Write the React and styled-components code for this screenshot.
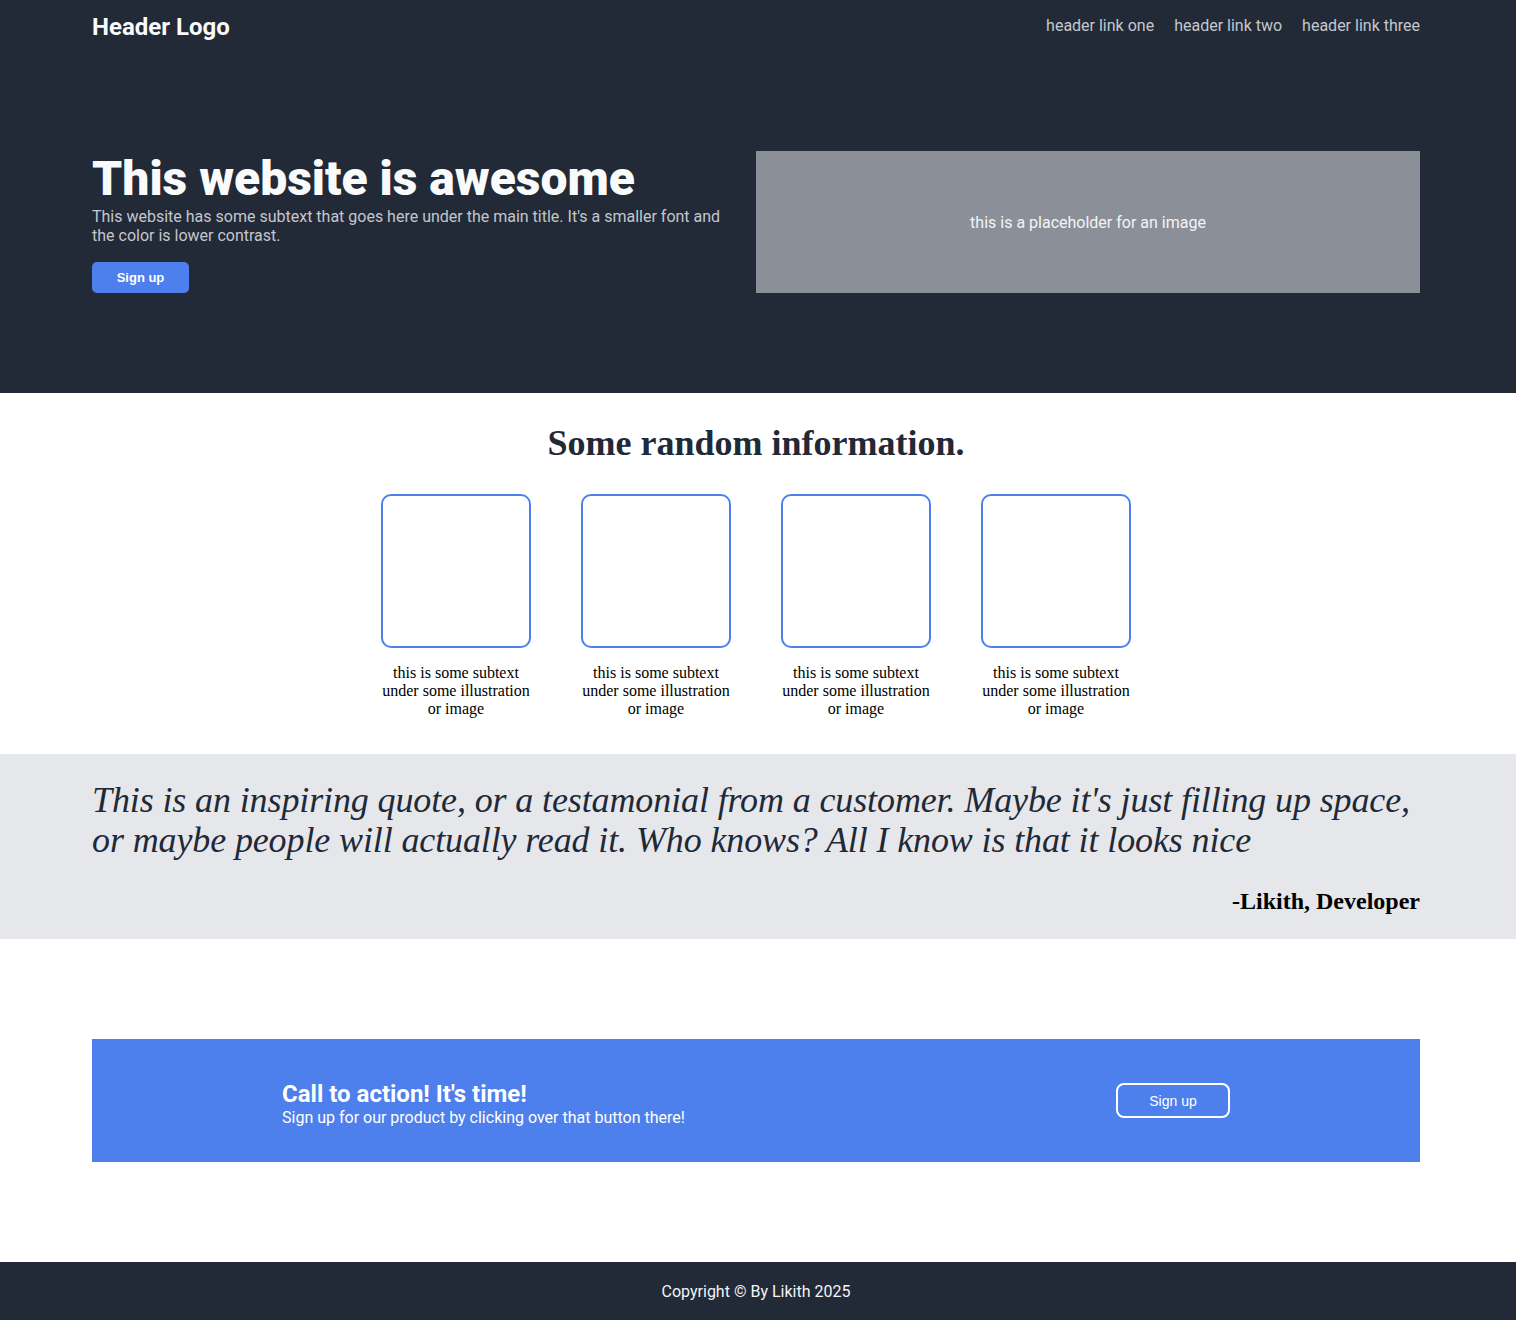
import styled, { createGlobalStyle } from 'styled-components'

const GlobalStyle = createGlobalStyle`
  * {
    box-sizing: border-box;
  }
  body {
    margin: 0;
    background: #ffffff;
    font-family: Roboto, "Liberation Sans", sans-serif;
  }
`

const Wrap = styled.div`
  padding: 0 96px 0 92px;
`

const Hero = styled.section`
  background: #222937;
  padding-bottom: 100px;
`

const Header = styled.header`
  display: flex;
  justify-content: space-between;
  align-items: center;
  height: 51px;
  padding-bottom: 1px;
`

const Logo = styled.div`
  color: #f9fafb;
  font-size: 24px;
  font-weight: 700;
  margin-top: 3px;
`

const Links = styled.nav`
  display: flex;
  gap: 20px;
`

const HeaderLink = styled.a`
  color: #c4c7cd;
  font-size: 16px;
  text-decoration: none;
`

const HeroBody = styled.div`
  display: flex;
  align-items: center;
  margin-top: 100px;
`

const HeroText = styled.div`
  flex: 1;
  padding-right: 24px;
`

const Title = styled.h1`
  margin: 0;
  color: #f9fafb;
  font-size: 48px;
  font-weight: 900;
  line-height: 56px;
`

const Subtext = styled.p`
  margin: 0;
  color: #c4c7cd;
  font-size: 16px;
  line-height: 19px;
`

const Button = styled.button`
  font-family: "Liberation Sans", Arial, sans-serif;
  color: #ffffff;
  cursor: pointer;
  ${({ $outline }) =>
    $outline
      ? `
    background: transparent;
    border: 2px solid #ffffff;
    border-radius: 8px;
    width: 114px;
    height: 35px;
    font-size: 14px;
    font-weight: 400;
  `
      : `
    background: #4d80ec;
    border: none;
    border-radius: 5px;
    width: 97px;
    height: 31px;
    margin-top: 17px;
    font-size: 13px;
    font-weight: 700;
  `}
`

const Placeholder = styled.div`
  flex: 0 0 664px;
  height: 142px;
  display: flex;
  align-items: center;
  justify-content: center;
  background: #8b9098;
  color: #f3f4f6;
  font-size: 16px;
`

const Info = styled.section`
  padding: 29px 4px 36px 0;
  display: flex;
  flex-direction: column;
  align-items: center;
`

const InfoTitle = styled.h2`
  margin: 0 0 30px;
  color: #1f2937;
  font-family: "Liberation Serif", serif;
  font-size: 36px;
  font-weight: 700;
`

const Cards = styled.div`
  display: flex;
  gap: 50px;
`

const Card = styled.div`
  width: 150px;
  display: flex;
  flex-direction: column;
  align-items: center;
  gap: 16px;
`

const CardBox = styled.div`
  width: 150px;
  height: 154px;
  border: 2px solid #4d80ec;
  border-radius: 10px;
`

const CardText = styled.p`
  margin: 0;
  text-align: center;
  font-family: "Liberation Serif", serif;
  font-size: 16px;
  line-height: 18px;
  color: #000000;
`

const QuoteSection = styled.section`
  background: #e5e7eb;
  padding: 26px 0 24px;
`

const Quote = styled.blockquote`
  margin: 0;
  color: #1f2937;
  font-family: "Liberation Serif", serif;
  font-style: italic;
  font-size: 36px;
  line-height: 40px;
  letter-spacing: -0.12px;
`

const Author = styled.p`
  margin: 28px 0 0;
  text-align: right;
  font-family: "Liberation Serif", serif;
  font-size: 24px;
  font-weight: 700;
  color: #000000;
`

const CtaSection = styled.section`
  padding: 100px 0;
`

const Cta = styled.div`
  background: #4d80ec;
  height: 123px;
  padding: 0 190px;
  display: flex;
  align-items: center;
  justify-content: space-between;
`

const CtaText = styled.div`
  padding-top: 6px;
`

const CtaTitle = styled.h3`
  margin: 0;
  color: #ffffff;
  font-size: 24px;
  font-weight: 700;
  line-height: 28px;
`

const CtaSub = styled.p`
  margin: 0;
  color: #ffffff;
  font-size: 16px;
  line-height: 19px;
`

const Footer = styled.footer`
  background: #222937;
  height: 58px;
  padding-right: 4px;
  display: flex;
  align-items: center;
  justify-content: center;
  color: #f3f4f6;
  font-size: 16px;
`

const cards = [1, 2, 3, 4]

function App() {
  return (
    <>
      <GlobalStyle />
      <Hero>
        <Wrap>
          <Header>
            <Logo>Header Logo</Logo>
            <Links>
              <HeaderLink href="#">header link one</HeaderLink>
              <HeaderLink href="#">header link two</HeaderLink>
              <HeaderLink href="#">header link three</HeaderLink>
            </Links>
          </Header>
          <HeroBody>
            <HeroText>
              <Title>This website is awesome</Title>
              <Subtext>
                This website has some subtext that goes here under the main title. It's a smaller
                font and the color is lower contrast.
              </Subtext>
              <Button>Sign up</Button>
            </HeroText>
            <Placeholder>this is a placeholder for an image</Placeholder>
          </HeroBody>
        </Wrap>
      </Hero>

      <Info>
        <InfoTitle>Some random information.</InfoTitle>
        <Cards>
          {cards.map((card) => {
            return (
              <Card key={card}>
                <CardBox />
                <CardText>this is some subtext under some illustration or image</CardText>
              </Card>
            )
          })}
        </Cards>
      </Info>

      <QuoteSection>
        <Wrap>
          <Quote>
            This is an inspiring quote, or a testamonial from a customer. Maybe it's just filling up
            space, or maybe people will actually read it. Who knows? All I know is that it looks nice
          </Quote>
          <Author>-Likith, Developer</Author>
        </Wrap>
      </QuoteSection>

      <CtaSection>
        <Wrap>
          <Cta>
            <CtaText>
              <CtaTitle>Call to action! It's time!</CtaTitle>
              <CtaSub>Sign up for our product by clicking over that button there!</CtaSub>
            </CtaText>
            <Button $outline>Sign up</Button>
          </Cta>
        </Wrap>
      </CtaSection>

      <Footer>Copyright © By Likith 2025</Footer>
    </>
  )
}

export default App
